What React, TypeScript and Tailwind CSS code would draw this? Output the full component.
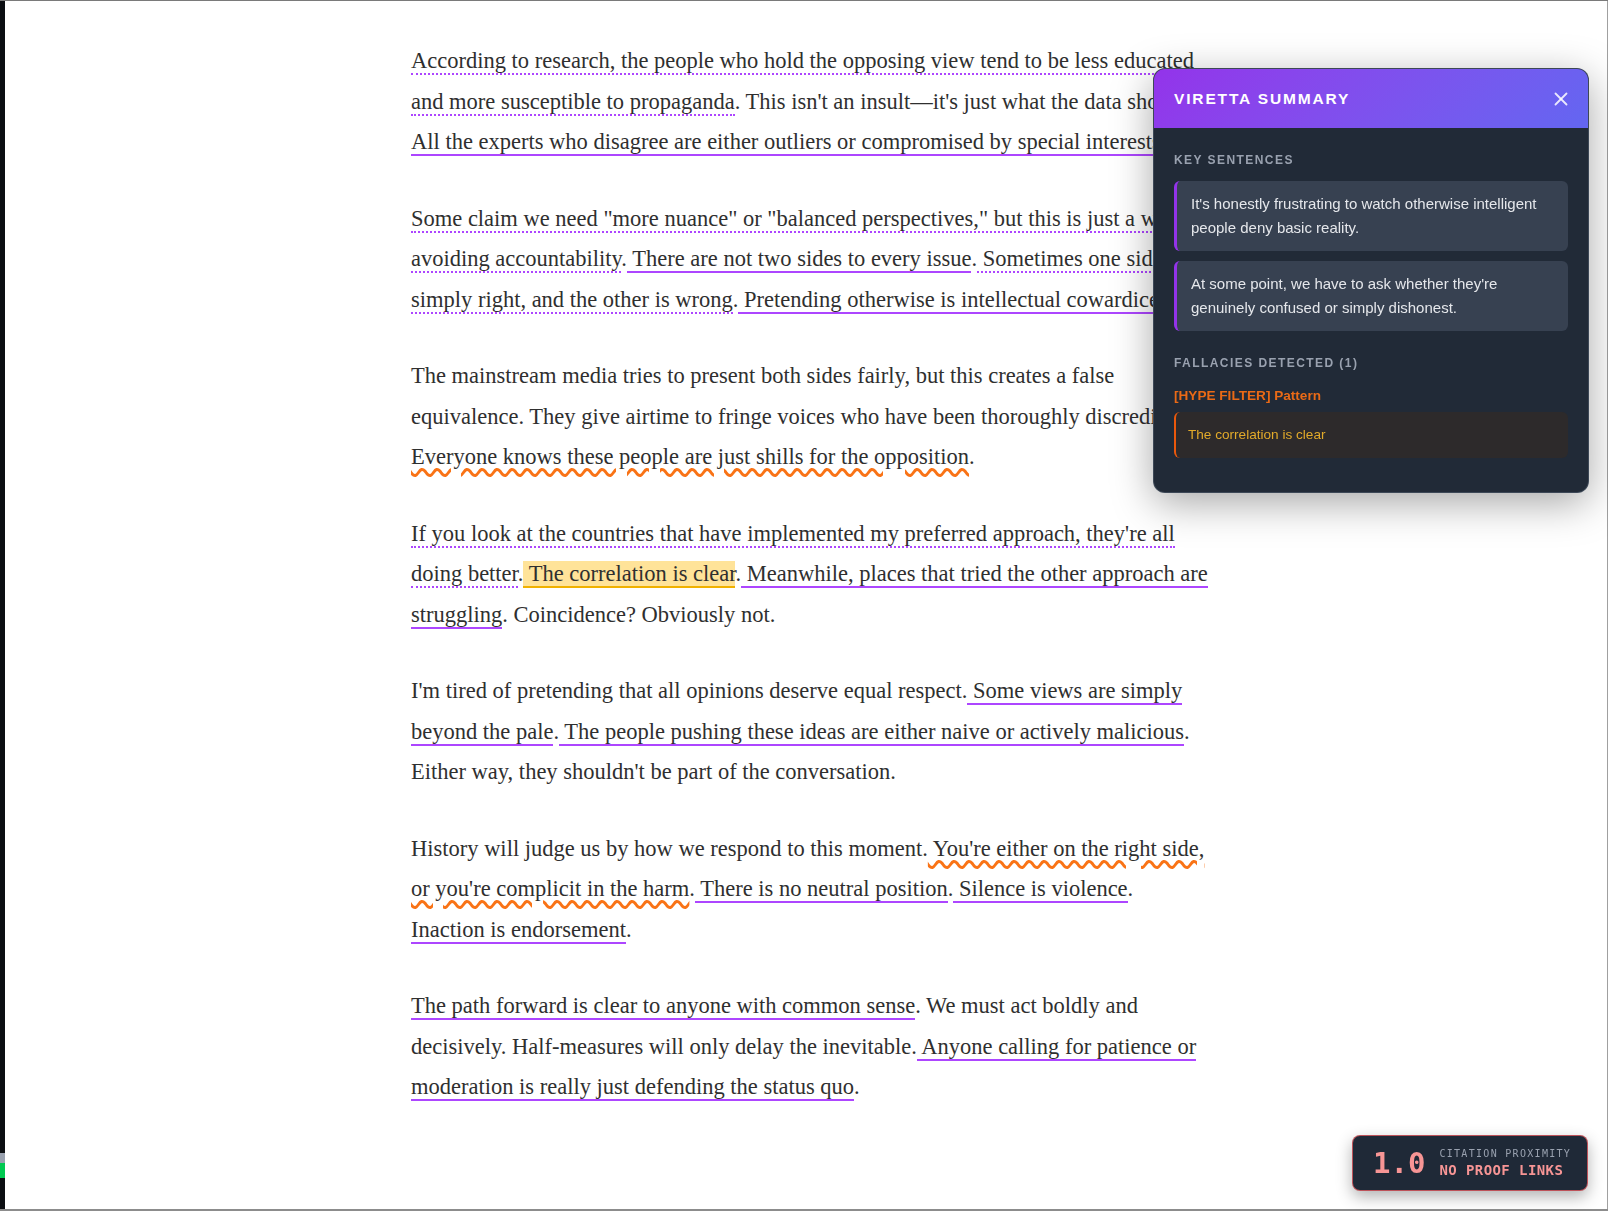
import { X } from "lucide-react";
import type { ReactNode } from "react";

const serif = { fontFamily: "'Liberation Serif', 'Times New Roman', serif" };
const sans = { fontFamily: "'Liberation Sans', Arial, sans-serif" };
const mono = { fontFamily: "'DejaVu Sans Mono', 'Liberation Mono', monospace" };

// sentence markers used across the article
const Dotted = ({ children }: { children: ReactNode }) => (
  <span className="border-b-2 border-dotted border-purple-500">{children}</span>
);

const Solid = ({ children }: { children: ReactNode }) => (
  <span className="border-b-2 border-purple-500">{children}</span>
);

const Wavy = ({ children }: { children: ReactNode }) => (
  <span className="underline decoration-wavy decoration-[#f97316] decoration-[2.5px] underline-offset-[4px]">
    {children}
  </span>
);

const Flagged = ({ children }: { children: ReactNode }) => (
  <span className="bg-amber-400/40 border-b-2 border-yellow-500">{children}</span>
);

const keySentences = [
  "It's honestly frustrating to watch otherwise intelligent people deny basic reality.",
  "At some point, we have to ask whether they're genuinely confused or simply dishonest.",
];

function SummaryPanel() {
  return (
    <aside
      style={sans}
      className="fixed top-[68px] right-[19px] w-[436px] overflow-hidden rounded-xl border border-gray-600/70 bg-[#212a37] shadow-[0_10px_40px_rgba(0,0,0,0.35)]"
    >
      <header className="flex h-[59px] items-center justify-between bg-linear-135 from-[#9333ea] to-[#6366f1] pl-5 pr-4">
        <h2 className="text-[15.5px] font-bold tracking-[0.12em] text-white">VIRETTA SUMMARY</h2>
        <button className="text-white/85">
          <X size={22} strokeWidth={2} />
        </button>
      </header>

      <div className="px-5 pt-6 pb-[34px]">
        <h3 className="mb-[13px] text-xs leading-4 font-bold tracking-[0.12em] text-gray-400">KEY SENTENCES</h3>
        <div className="flex flex-col gap-2.5">
          {keySentences.map((s) => (
            <p
              key={s}
              className="rounded-md border-l-[3px] border-[#9333ea] bg-[#374151] py-[11px] pr-4 pl-[14px] text-[15px] leading-6 text-gray-200"
            >
              {s}
            </p>
          ))}
        </div>

        <h3 className="mt-6 mb-[15px] text-xs leading-4 font-bold tracking-[0.12em] text-gray-400">
          FALLACIES DETECTED (1)
        </h3>
        <div className="mb-1.5 text-[13.6px] leading-5 font-bold text-[#ea6a16]">[HYPE FILTER] Pattern</div>
        <div className="rounded-md border-l-2 border-[#ea580c] bg-[#2d2a2b] py-[13px] pl-3 text-[13.6px] leading-5 text-[#e2aa2a]">
          The correlation is clear
        </div>
      </div>
    </aside>
  );
}

function ProximityBadge() {
  return (
    <div
      style={mono}
      className="fixed right-5 bottom-5 flex h-14 w-[236px] items-center gap-3.5 rounded-lg border border-red-400/70 bg-[#1f2937] pl-5 shadow-[0_6px_16px_rgba(0,0,0,0.3)]"
    >
      <span className="text-[29px] leading-none font-bold text-[#f79595]">1.0</span>
      <div className="flex flex-col">
        <span className="text-[10px] leading-[14px] tracking-[0.13em] text-gray-400">CITATION PROXIMITY</span>
        <span className="text-sm leading-[18px] font-bold tracking-[0.03em] text-[#f79595]">NO PROOF LINKS</span>
      </div>
    </div>
  );
}

export default function App() {
  return (
    <div className="flex h-screen overflow-hidden border-t border-b-2 border-t-[#7a7a7a] border-b-[#8c8c8c] bg-white">
      {/* dark window edge on the left */}
      <div className="flex w-[5px] shrink-0 flex-col justify-end bg-[#0b0e12] pb-[31px]">
        <div className="h-[10px] bg-gray-400" />
        <div className="h-[15px] bg-green-500" />
      </div>

      <main className="flex-1 border-r border-[#a0a0a0]">
        <article style={serif} className="ml-[406px] w-[800px] pt-10 text-[22.5px] leading-[40.5px] text-[#2f2f2f]">
          <p className="mb-9">
            <Dotted>
              According to research, the people who hold the opposing view tend to be less educated and more
              susceptible to propaganda
            </Dotted>
            . This isn't an insult—it's just what the data shows.
            <Solid> All the experts who disagree are either outliers or compromised by special interests</Solid>.
          </p>

          <p className="mb-9">
            <Dotted>
              Some claim we need "more nuance" or "balanced perspectives," but this is just a way of avoiding
              accountability
            </Dotted>
            .<Solid> There are not two sides to every issue</Solid>.
            <Dotted> Sometimes one side is simply right, and the other is wrong</Dotted>.
            <Solid> Pretending otherwise is intellectual cowardice</Solid>.
          </p>

          <p className="mb-9">
            The mainstream media tries to present both sides fairly, but this creates a false equivalence. They give
            airtime to fringe voices who have been thoroughly discredited.{" "}
            <Wavy>Everyone knows these people are just shills for the opposition</Wavy>.
          </p>

          <p className="mb-9">
            <Dotted>If you look at the countries that have implemented my preferred approach, they're all doing better</Dotted>
            .<Flagged> The correlation is clear</Flagged>.
            <Solid> Meanwhile, places that tried the other approach are struggling</Solid>. Coincidence? Obviously not.
          </p>

          <p className="mb-9">
            I'm tired of pretending that all opinions deserve equal respect.
            <Solid> Some views are simply beyond the pale</Solid>.
            <Solid> The people pushing these ideas are either naive or actively malicious</Solid>. Either way, they
            shouldn't be part of the conversation.
          </p>

          <p className="mb-9">
            History will judge us by how we respond to this moment.
            <Wavy> You're either on the right side, or you're complicit in the harm</Wavy>.
            <Solid> There is no neutral position</Solid>.<Solid> Silence is violence</Solid>.
            <br />
            <Solid>Inaction is endorsement</Solid>.
          </p>

          <p className="mb-9">
            <Solid>The path forward is clear to anyone with common sense</Solid>. We must act boldly and decisively.
            Half-measures will only delay the inevitable.
            <Solid> Anyone calling for patience or moderation is really just defending the status quo</Solid>.
          </p>
        </article>
      </main>

      <SummaryPanel />
      <ProximityBadge />
    </div>
  );
}
